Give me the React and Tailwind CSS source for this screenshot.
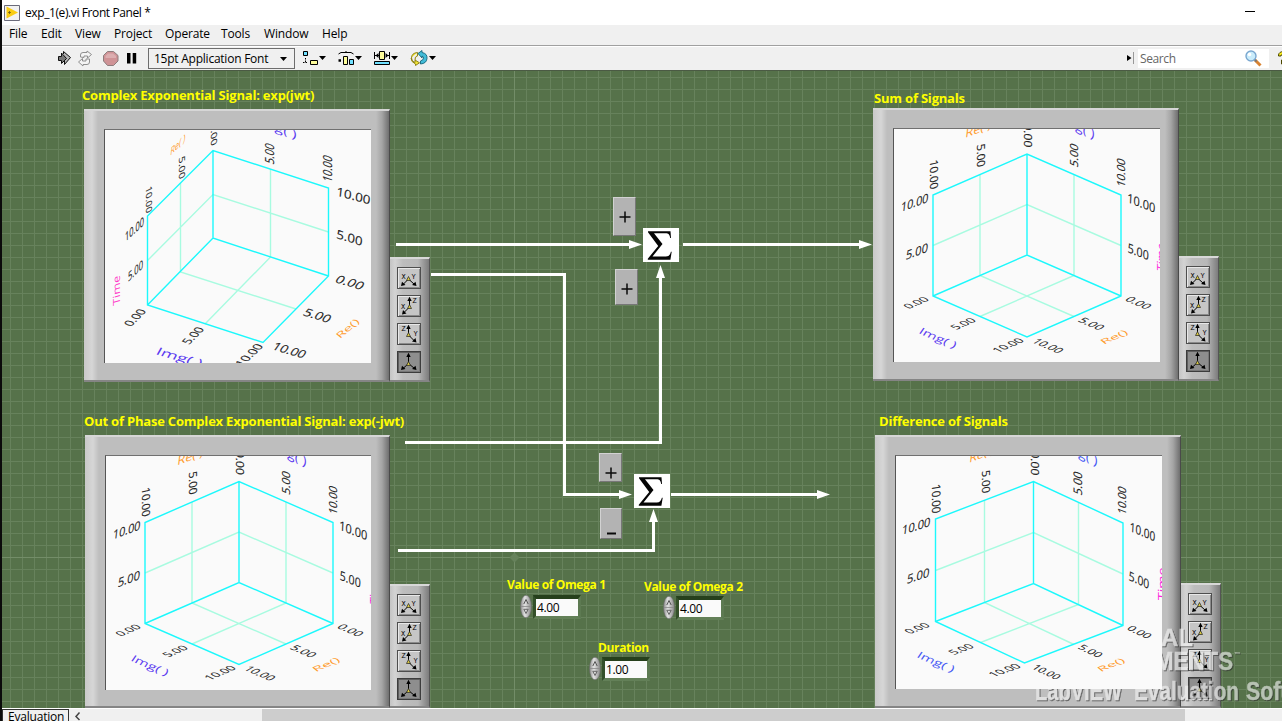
import React from "react";

const UI = "font-['Open_Sans','Noto_Sans',sans-serif]";

/* A tick or axis label lying in the plane of the cube: baseline start, baseline end, cap-height vector. */
function PlaneText({ d, fill = "#222", weight = 0.15 }) {
  const [text, x0, y0, x1, y1, ux, uy] = d;
  const w = { 4: 20, 5: 26 }[text.length] || 28;
  const m = [(x1 - x0) / w, (y1 - y0) / w, -ux / 7.2, -uy / 7.2, x0, y0];
  return (
    <text
      transform={`matrix(${m.join(" ")})`}
      fontSize="10"
      textLength={w}
      lengthAdjust="spacingAndGlyphs"
      fill={fill}
      stroke={fill}
      strokeWidth={weight}
      fontFamily="'Open Sans', 'Noto Sans', sans-serif"
      xmlSpace="preserve"
    >
      {text}
    </text>
  );
}

function Cube({ box, cube, grid, ticks, axes, shift = "0 0" }) {
  return (
    <svg className="block h-full w-full" viewBox={box}>
      <g transform={`translate(${shift})`}>
        <path d={grid} fill="none" stroke="#a8fbe0" strokeWidth="1.4" />
        <path d={cube} fill="none" stroke="#1cf8fc" strokeWidth="1.4" />
        {ticks.map((t, i) => (
          <PlaneText key={i} d={t} weight={0.1} />
        ))}
        {axes.map(([color, ...t], i) => (
          <PlaneText key={i} d={t} fill={color} weight={0} />
        ))}
      </g>
    </svg>
  );
}

const ORANGE = "#ff9c2e";
const sumCube = {
  cube: "M933 296V195L1027 154L1121 195V296L1027 337ZL1027 255L1121 296M1027 154V255",
  grid: "M980 174.5V275.5L1074 316.5M1074 174.5V275.5L980 316.5M933 245.5L1027 204.5L1121 245.5",
  ticks: [
    ["10.00", 930, 161, 930, 190, 8, -2],
    ["5.00", 977, 145, 977, 168, 8, -2],
    ["0.00", 1024, 123, 1024, 147, 8, 1],
    ["5.00", 1077.5, 168, 1077.5, 145, -8, -3],
    ["10.00", 1124.5, 188, 1124.5, 160, -8, -3],
    ["10.00", 900.5, 212, 928, 202, 1, -9],
    ["5.00", 905.5, 260, 927.5, 251.5, 1, -9],
    ["0.00", 909, 309, 930, 300, -7, -3.5],
    ["5.00", 956, 330, 977, 321, -7, -3.5],
    ["10.00", 998, 353, 1025, 341, -7, -3.5],
    ["10.00", 1031, 342, 1058, 353.5, 7, -4],
    ["5.00", 1077, 321, 1099, 330.5, 7, -4],
    ["0.00", 1124, 300, 1146, 309.5, 7, -4],
    ["10.00", 1127, 202, 1155, 213, 0.5, -9],
    ["5.00", 1127.5, 252, 1148.5, 260.5, 0.5, -9],
  ],
  axes: [
    ["#5a3af0", "Img( )", 918, 333, 954, 348.5, 4, -6],
    ["#5a3af0", "Img( )", 1059, 121, 1094, 139, 1, -9],
    [ORANGE, "Re()", 1104, 344.5, 1129, 333.5, -5, -4],
    [ORANGE, "Re( )", 965, 138, 991, 128, 1, -9],
  ],
};

const plots = {
  jwt: {
    box: "105 130 266 233",
    cube: "M147.5 305V216L213 150.5L328.5 188V276L263 342.5ZL213 238L328.5 276M213 150.5V238",
    grid: "M180.5 183V272L296 309M270.5 169V257L205 324M147.5 260.5L213 194.5L328.5 232",
    ticks: [
      ["10.00", 145.5, 188, 145.5, 214, 6, -3],
      ["5.00", 178.5, 158, 178.5, 180, 6, -3],
      ["0.00", 210.5, 124, 210.5, 147, 6, -3],
      ["5.00", 274, 165, 274, 145, -9, -3],
      ["10.00", 332, 183, 332, 157, -9, -3],
      ["10.00", 336, 195.5, 370, 204.5, 1, -8.5],
      ["5.00", 336, 238, 362, 246, 1, -8.5],
      ["0.00", 334, 282, 361, 290, 5, -7],
      ["5.00", 302, 315, 328, 323, 5, -7],
      ["10.00", 271, 349, 303, 358.5, 5, -7],
      ["10.00", 125, 242, 144, 225, 0, -9],
      ["5.00", 128, 282, 143, 268, 0, -9],
      ["0.00", 131, 327, 147, 311, -8, -3],
      ["5.00", 189, 345, 205, 329, -8, -3],
      ["10.00", 242, 367, 264, 346, -8, -3],
    ],
    axes: [
      ["#5a3af0", "Img( )", 155, 354, 200, 367, 4, -7],
      ["#5a3af0", "Img( )", 256, 123, 296, 139, 1, -8],
      [ORANGE, "Re()", 340, 339, 360, 322, -5, -4],
      [ORANGE, "Re( )", 170, 156, 185, 141, 1, -8],
      ["#ff3ac8", "Time", 120, 304, 120, 275, -7, 2],
    ],
  },
  sum: {
    ...sumCube,
    box: "894 129 266 233",
    axes: [...sumCube.axes, ["#ff22dd", "Time", 1165, 273, 1165, 245, -8, -3]],
  },
  negJwt: {
    ...sumCube,
    box: "106 456 265 234",
    shift: "-788 327.5",
    axes: [...sumCube.axes, ["#ff22dd", "Time", 1166, 279, 1166, 251, -8, -3]],
  },
  diff: {
    box: "896 456 266 233",
    cube: "M935.5 621.5V519L1033.5 481.5L1123 523V625.5L1024.5 663ZL1033.5 583.5L1123 625.5M1033.5 481.5V583.5",
    grid: "M984.5 500V602.5L1074 644.5M1078.5 503V604.5L980.5 642.5M935.5 570.5L1033.5 532.5L1123 574",
    ticks: [
      ["10.00", 932, 485, 932, 514, 8.5, -1.5],
      ["5.00", 981.5, 471, 981.5, 494, 8, -1.5],
      ["0.00", 1031, 451, 1031, 475, 8, 1],
      ["5.00", 1082, 496, 1082, 473, -8.5, -3],
      ["10.00", 1126, 515.5, 1126, 488, -8, -3],
      ["10.00", 901.5, 535, 930, 526, 1, -9],
      ["5.00", 906.5, 584, 929, 576.5, 1, -9],
      ["0.00", 910, 634, 931, 626, -7, -3.5],
      ["5.00", 954, 655, 975, 647, -7, -3.5],
      ["10.00", 994, 677, 1022, 667, -7, -3.5],
      ["10.00", 1031, 668, 1056, 680, 6, -4],
      ["5.00", 1077, 648, 1098, 658, 6, -4],
      ["0.00", 1126, 629, 1147, 639, 6, -4],
      ["10.00", 1129.5, 531, 1155, 541.5, 0.5, -9],
      ["5.00", 1128.5, 580, 1149, 589, 0.5, -9],
    ],
    axes: [
      ["#4457f4", "Img( )", 916, 657, 952, 672.5, 4, -6],
      ["#4457f4", "Img( )", 1062, 448, 1097, 466, 1, -9],
      [ORANGE, "Re()", 1101, 672, 1126, 661.5, -5, -4],
      [ORANGE, "Re( )", 969, 463, 994, 453, 1, -9],
      ["#ff22dd", "Time", 1166, 601, 1166, 568, -8, -1],
    ],
  },
};

const axisIcons = {
  xy: { lines: "M10.5 11L5 16.5M10.5 11L16.5 16.5", heads: "M3 18L4 13.8L7.5 17ZM18.5 18L17.5 13.8L14 17Z", c: [10.5, 11], t: [["X", 3.5, 10.5], ["Y", 13.5, 10.5]] },
  xz: { lines: "M11.5 10.5V4M11.5 11L5.5 17", heads: "M11.5 0.8L9.3 5H13.7ZM4 18.5L5 14L8.5 17.5Z", c: [11.5, 11], t: [["X", 3, 12.5], ["Z", 14.5, 6.5]] },
  zy: { lines: "M10.5 10.5V4M10.5 11L16.5 17", heads: "M10.5 0.8L8.3 5H12.7ZM18.5 18.5L17.5 14L14 17.5Z", c: [10.5, 11], t: [["Z", 3.5, 6.5], ["Y", 15.5, 12]] },
  xyz: { lines: "M10.5 11V4M10.5 11.5L5 16.5M10.5 11.5L16.5 16.5", heads: "M10.5 0.8L8.3 5H12.7ZM3 18L4 13.8L7.5 17ZM18.5 18L17.5 13.8L14 17Z", c: [10.5, 12], t: [] },
};

function AxisButton({ kind, pressed }) {
  const a = axisIcons[kind];
  return (
    <div
      className={
        "h-[22px] w-6 border " +
        (pressed
          ? "border-[#3c3c3c] bg-[#8e8e8e] shadow-[inset_1px_1px_0_#5e5e5e,inset_-1px_-1px_0_#777]"
          : "border-[#4e4e4e] bg-[#c6c6c6] shadow-[inset_1px_1px_0_#e8e8e8,inset_-1px_-1px_0_#8a8a8a]")
      }
    >
      <svg className="block h-5 w-[22px]" viewBox="0 0 22 20">
        <path d={a.lines} stroke="#000" strokeWidth="1" />
        <path d={a.heads} fill="#000" />
        <path d={`M${a.c[0]} ${a.c[1] - 2.5}L${a.c[0] + 2} ${a.c[1] + 1.5}H${a.c[0] - 2}Z`} fill="#d8c840" stroke="#222" strokeWidth="0.7" />
        {a.t.map(([s, x, y]) => (
          <text key={s} x={x} y={y} fontSize="7" fontFamily="'Liberation Mono', monospace" fill="#000">
            {s}
          </text>
        ))}
      </svg>
    </div>
  );
}

function Title({ place, type = "text-[13px] tracking-[-0.2px]", children }) {
  return (
    <div className={`absolute leading-[16px] font-bold whitespace-nowrap text-[#ffff00] ${place} ${type}`}>
      {children}
    </div>
  );
}

function Graph({ place, size, side, screen, plot }) {
  return (
    <div className={`absolute flex items-end ${place}`}>
      <div
        className={`border-t-2 border-b-2 border-t-[#d6d6d6] border-b-[#858585] border-r border-r-[#4a4a4a] bg-[linear-gradient(to_right,#c9c9c9_0,#d6d6d6_8px,#bebebe_14px,#bebebe_calc(100%-13px),#a5a5a5_calc(100%-7px),#6f6f6f_100%)] ${size}`}
      >
        <div className={`overflow-hidden border-t border-l border-t-[#707070] border-l-[#555] bg-[#fafafa] ${screen}`}>
          <Cube {...plots[plot]} />
        </div>
      </div>
      <div
        className={`flex w-10 flex-col gap-1.5 border-t-2 border-b-2 border-t-[#d8d8d8] border-b-[#858585] border-r border-r-[#555] bg-[linear-gradient(to_right,#c4c4c4,#d3d3d3_5px,#bdbdbd_13px,#b8b8b8_28px,#7c7c7c)] pt-2 pl-[7px] ${side}`}
      >
        <AxisButton kind="xy" />
        <AxisButton kind="xz" />
        <AxisButton kind="zy" />
        <AxisButton kind="xyz" pressed />
      </div>
    </div>
  );
}

function Sign({ place, minus, cy }) {
  return (
    <div className={`absolute border border-t-[#d2d2d2] border-l-[#d2d2d2] border-r-[#777] border-b-[#777] bg-[#b3b3b3] ${place}`}>
      <svg className="block h-full w-full">
        <path d={minus ? `M6 ${cy - 0.5}h9` : `M5.5 ${cy}h11M11 ${cy - 5.5}v11`} stroke="#0a0a0a" strokeWidth={minus ? 2 : 1.5} />
      </svg>
    </div>
  );
}

function Sigma({ place }) {
  return (
    <div className={`absolute flex h-[34px] w-9 items-center justify-center bg-white ${place}`}>
      <svg className="block h-[34px] w-9" viewBox="0 0 36 34">
        <path
          d="M5 3.2H27.5L28 10H27.2C26.6 6.6 25.5 5.2 22.5 5.2H11L19.5 16L9.5 28.5H22.8C25.8 28.5 27 27 27.9 23.8H28.7L27.4 31.7H4.8V30.7L15.2 18L5 4.2Z"
          fill="#050505"
        />
      </svg>
    </div>
  );
}

function Numeric({ place, value }) {
  return (
    <div className={`absolute flex items-center gap-px ${place}`}>
      <svg className="block h-6 w-3" viewBox="0 0 12 24">
        <defs>
          <linearGradient id="knob" x1="0" x2="1" y1="0" y2="0">
            <stop offset="0" stopColor="#8d8d8d" />
            <stop offset="0.4" stopColor="#e2e2e2" />
            <stop offset="1" stopColor="#858585" />
          </linearGradient>
        </defs>
        <ellipse cx="6" cy="11.5" rx="5.5" ry="11.3" fill="url(#knob)" stroke="#6c6c6c" strokeWidth="0.6" />
        <path d="M1 11.5H11" stroke="#888" strokeWidth="0.8" />
        <path d="M3.8 9L6 4.5L8.2 9" fill="none" stroke="#555" strokeWidth="1" />
        <path d="M3.8 14.3H8.2L6 18.5Z" fill="none" stroke="#666" strokeWidth="1" />
      </svg>
      <div className="border-t-4 border-r-[3px] border-b-[3px] border-l-[3px] border-t-[#26401c] border-r-[#5d7a52] border-b-[#638058] border-l-[#34502a]">
        <div className="h-[17px] w-[42px] bg-[#fafafa] pl-px text-[12px] leading-[17px] tracking-[-0.4px] text-black">{value}</div>
      </div>
    </div>
  );
}

function Wires() {
  return (
    <svg className="absolute top-0 left-0 h-[638px] w-[1282px]" viewBox="0 70 1282 638">
      <path
        d="M396 244.5H632M683 244.5H862M431 274.5H564.5V494.5H622M405 442.5H660.5V275M671 494.5H820M398 550.5H653.5V519"
        fill="none"
        stroke="#fff"
        strokeWidth="3"
      />
      <path
        d="M629 240V249L642 244.5ZM859 240V249L872 244.5ZM619 490V499L632 494.5ZM817 490V499L830 494.5ZM656 278H665L660.5 265ZM649 522H658L653.5 509Z"
        fill="#fff"
      />
    </svg>
  );
}

function Watermark() {
  return (
    <svg className="pointer-events-none absolute top-[550px] left-[1022px] h-[88px] w-[260px]" viewBox="1022 620 260 88">
      <defs>
        <clipPath id="outsidePlot">
          <path d="M1162 620H1282V708H1022V689H1162Z" />
        </clipPath>
      </defs>
      <g clipPath="url(#outsidePlot)">
        <g
          className="drop-shadow-[1px_1px_0.5px_#333]"
          fill="#f4f4f4"
          stroke="#f4f4f4"
          strokeWidth="0.4"
          opacity="0.62"
          fontFamily="'Liberation Sans Narrow', 'Liberation Sans', Arial, sans-serif"
          fontWeight="700"
        >
          <text x="1161" y="646" fontSize="24" textLength="32" lengthAdjust="spacingAndGlyphs">AL</text>
          <text x="1155" y="670" fontSize="25" textLength="78" lengthAdjust="spacingAndGlyphs">MENTS</text>
          <text x="1234" y="656" fontSize="6" strokeWidth="0">™</text>
          <text x="1035" y="700" fontSize="26" textLength="87" lengthAdjust="spacingAndGlyphs">LabVIEW</text>
          <text x="1134" y="700" fontSize="26" textLength="105" lengthAdjust="spacingAndGlyphs">Evaluation</text>
          <text x="1246" y="700" fontSize="26" textLength="90" lengthAdjust="spacingAndGlyphs">Software</text>
        </g>
      </g>
    </svg>
  );
}

const menu = [
  ["File", "w-8"],
  ["Edit", "w-[34px]"],
  ["View", "w-[39px]"],
  ["Project", "w-[51px]"],
  ["Operate", "w-[56px]"],
  ["Tools", "w-[43px]"],
  ["Window", "w-[58px]"],
  ["Help", "w-[40px]"],
];

function Toolbar() {
  return (
    <div className="flex h-[23px] items-center bg-[#f0f0f0]">
      <svg className="block h-[23px] w-[146px] shrink-0" viewBox="2 47 146 23">
        <g strokeWidth="1" stroke="#111">
          <path d="M63.5 54V51.5L70.5 57.5L64.5 64.5V61" fill="#b5b5b5" />
          <path d="M58.5 56.5H61.5V53L66.5 58.5L61.5 63.5V60.5H58.5Z" fill="#777" />
        </g>
        <g fill="#f4f4f4" stroke="#8f8f8f" strokeWidth="1">
          <path d="M80.5 57V55Q80.5 52.5 83 52.5H87V51L91.5 54.5L87.5 58V56H84V57.5Z" />
          <path d="M89.5 59V62Q89.5 64.5 87 64.5H83V66L78.5 62L82.5 58.5V61H86V59Z" />
        </g>
        <path d="M107.5 51.5H113.5L118 55.5V61L113.5 65.5H107.5L103.5 61V55.5Z" fill="#cf9396" stroke="#8d7d7d" strokeWidth="1" />
        <path d="M108 53.5H113L116 56V58H105.5V56Z" fill="#dcaeb0" />
        <path d="M127 53H130.5V63.5H127ZM132.7 53H136.2V63.5H132.7Z" fill="#000" />
      </svg>
      <div className="flex h-[21px] w-[147px] shrink-0 items-center justify-between border border-[#6d6d6d] bg-[#f0f0f0] pr-[7px] pl-[5px] text-[12px] tracking-[-0.24px] text-black">
        <span className="leading-4">15pt Application Font</span>
        <svg className="h-1 w-[7px]" viewBox="0 0 7 4"><path d="M0 0H7L3.5 4Z" /></svg>
      </div>
      <svg className="block h-[23px] w-[150px] shrink-0" viewBox="295 47 150 23">
        <g stroke="#000" strokeWidth="1" fill="none">
          <path d="M303.5 51.5H307.5V55.5H303.5Z" fill="#6fe0ff" />
          <path d="M305.5 58V63M303 62.5H308" strokeDasharray="1.5 1" />
          <path d="M310.5 60.5H317.5V64.5H310.5Z" fill="#fdfc9a" />
          <path d="M338.5 54L341 52.5H351L353.5 54M346 51V52" />
          <path d="M343.5 56.5H347.5V64.5H343.5Z" fill="#fdfc9a" />
          <path d="M338.5 60.5H341" strokeWidth="2.5" />
          <path d="M349.5 59.5H353.5V64.5H349.5V59.5Z" fill="#6fe0ff" />
          <path d="M374.5 52V59M389.5 52V59M375 55.5H379M386 55.5H390" />
          <path d="M379.5 51.5H384.5V59.5H379.5Z" fill="#fdfc9a" />
          <path d="M374.5 61.5H389.5V64.5H374.5Z" fill="#6fe0ff" />
        </g>
        <path d="M375.5 55.5L378.5 53V58ZM388.5 55.5L385.5 53V58Z" />
        <path d="M417.5 52.5Q411.5 53 411.5 58Q411.5 61.5 415 62.5V60L419.5 62.8L415.5 65.5V64Q411 62 411 58M417.5 52.5V56Q414.5 56.5 415 60" fill="#f2e534" stroke="#85780e" strokeWidth="0.9" />
        <path d="M418 53.5L422 50.5V52.5Q427.5 53.5 427 58.5Q426.5 63.5 420.5 64V61Q423.5 60 423.5 58Q423.5 56.5 422 56V58Z" fill="#42bcd8" stroke="#14657b" strokeWidth="0.9" />
        <path d="M319 56H326L322.5 60ZM355 56H362L358.5 60ZM391 56H398L394.5 60ZM429 56H436L432.5 60Z" />
      </svg>
      <div className="grow" />
      <svg className="block h-[23px] w-3 shrink-0" viewBox="1126 47 12 23">
        <path d="M1127 55L1131.5 58L1127 61Z" />
        <path d="M1133.5 52V64" stroke="#999" />
      </svg>
      <div className="flex h-[19px] w-[131px] shrink-0 items-center justify-between bg-white pr-[7px] pl-[2px] text-[12px] text-[#666]">
        <span className="tracking-[-0.4px]">Search</span>
        <svg className="h-[17px] w-[17px]" viewBox="0 0 17 17">
          <path d="M10 10L15.5 15.5" stroke="#d98230" strokeWidth="3" />
          <path d="M9 9L11.5 11.5" stroke="#777" strokeWidth="2" />
          <circle cx="6" cy="6" r="5" fill="#c9ecfb" stroke="#7aa7d0" strokeWidth="1.4" />
          <circle cx="4.5" cy="4.5" r="1.8" fill="#fff" />
        </svg>
      </div>
      <svg className="block h-[23px] w-[13px] shrink-0" viewBox="1269 47 13 23">
        <path d="M1278.5 55Q1279 51.5 1284 51.5V55H1281V56H1278.5ZM1281.5 60V64H1285V60Z" fill="#f7ea1c" stroke="#4d4800" />
      </svg>
    </div>
  );
}

export default function App() {
  return (
    <div className={`flex h-[721px] w-[1282px] overflow-hidden bg-[#0b0b0b] pl-[2px] ${UI}`}>
      <div className="flex w-[1280px] flex-col overflow-hidden">
        <div className="flex h-[25px] shrink-0 items-center bg-white pl-[2px]">
          <svg className="block h-4 w-4" viewBox="0 0 16 16">
            <path d="M0.5 0.5H15.5V15.5H0.5Z" fill="#f2f2f2" stroke="#6b6b7b" />
            <path d="M2.5 1.5L14 7.5L2.5 13.5Z" fill="#f9cc12" />
            <path d="M4 7.5H7M5.5 6V9" stroke="#6d5b10" strokeWidth="0.8" />
          </svg>
          <span className="ml-[5px] text-[12px] tracking-[-0.4px] text-black">exp_1(e).vi Front Panel *</span>
          <div className="mr-[27px] mb-[2px] ml-auto h-px w-[10px] bg-black" />
        </div>
        <div className="flex h-5 shrink-0 items-center bg-[#f0f0f0] pl-[7px] text-[12px] leading-[18px] tracking-[-0.15px] text-black">
          {menu.map(([label, w]) => (
            <div key={label} className={`h-5 ${w}`}>{label}</div>
          ))}
        </div>
        <div className="h-px shrink-0 bg-[#a0a0a0]" />
        <div className="h-px shrink-0 bg-white" />
        <Toolbar />
        <div className="relative h-[638px] shrink-0 overflow-hidden border-t border-[#4b5a44] bg-[#56724a]">
          <div className="absolute -top-px -left-[2px] h-[639px] w-[1282px]">
            <svg className="absolute inset-0 h-full w-full" viewBox="0 70 1282 639">
              <defs>
                <pattern id="grid" x="10" y="5" width="12" height="12" patternUnits="userSpaceOnUse">
                  <path d="M0 0.5H12M0.5 0V12" stroke="#67825c" />
                </pattern>
              </defs>
              <rect x="0" y="70" width="1282" height="639" fill="url(#grid)" />
              <path d="M514.5 70V709M0 557.5H1282" stroke="#738d68" />
              <path d="M514.5 552.5L519.5 557.5L514.5 562.5L509.5 557.5Z" fill="#67825c" />
            </svg>

            <Title place="left-[82px] top-[17px]">Complex Exponential Signal: exp(jwt)</Title>
            <Title place="left-[84px] top-[343px]">Out of Phase Complex Exponential Signal: exp(-jwt)</Title>
            <Title place="left-[874px] top-[20px]">Sum of Signals</Title>
            <Title place="left-[879px] top-[343px]">Difference of Signals</Title>

            <Graph plot="jwt" place="left-[84px] top-[39px]" size="h-[273px] w-[306px] pt-[18px] pl-5" screen="h-[234px] w-[267px]" side="h-[125px]" />
            <Graph plot="sum" place="left-[873px] top-[38px]" size="h-[273px] w-[306px] pt-[18px] pl-5" screen="h-[234px] w-[267px]" side="h-[125px]" />
            <Graph plot="negJwt" place="left-[85px] top-[365px]" size="h-[273px] w-[305px] pt-[18px] pl-5" screen="h-[235px] w-[266px]" side="h-[124px]" />
            <Graph plot="diff" place="left-[875px] top-[365px]" size="h-[273px] w-[306px] pt-[18px] pl-5" screen="h-[234px] w-[267px]" side="h-[125px]" />

            <Wires />
            <Sign place="left-[613px] top-[127px] h-[39px] w-[23px]" cy={19} />
            <Sign place="left-[615px] top-[199px] h-[36px] w-[23px]" cy={19} />
            <Sign place="left-[599px] top-[383px] h-[29px] w-[23px]" cy={19} />
            <Sign place="left-[600px] top-[438px] h-[31px] w-[22px]" cy={25} minus />
            <Sigma place="left-[643px] top-[158px]" />
            <Sigma place="left-[634px] top-[404px]" />

            <Title place="left-[507px] top-[507px]" type="text-[12px] tracking-[-0.36px]">Value of Omega 1</Title>
            <Numeric place="left-[520px] top-[525px]" value="4.00" />
            <Title place="left-[644px] top-[509px]" type="text-[12px] tracking-[-0.36px]">Value of Omega 2</Title>
            <Numeric place="left-[663px] top-[526px]" value="4.00" />
            <Title place="left-[598px] top-[570px]" type="text-[12px] tracking-[-0.36px]">Duration</Title>
            <Numeric place="left-[589px] top-[587px]" value="1.00" />

            <Watermark />
          </div>
        </div>
        <div className="flex h-[13px] shrink-0 overflow-hidden border-t border-white bg-[#f0f0f0]">
          <div className="h-4 w-[67px] border border-[#333] bg-[#f0f0f0] pl-[5px] text-[12px] leading-[14px] tracking-[-0.2px] text-black">Evaluation</div>
          <svg className="ml-1 h-3 w-3" viewBox="0 0 12 12">
            <path d="M6.5 3.5L3 7.5L6.5 11" fill="none" stroke="#444" strokeWidth="1.5" />
          </svg>
          <div className="ml-[177px] h-full w-[923px] bg-[#cdcdcd]" />
        </div>
      </div>
    </div>
  );
}
